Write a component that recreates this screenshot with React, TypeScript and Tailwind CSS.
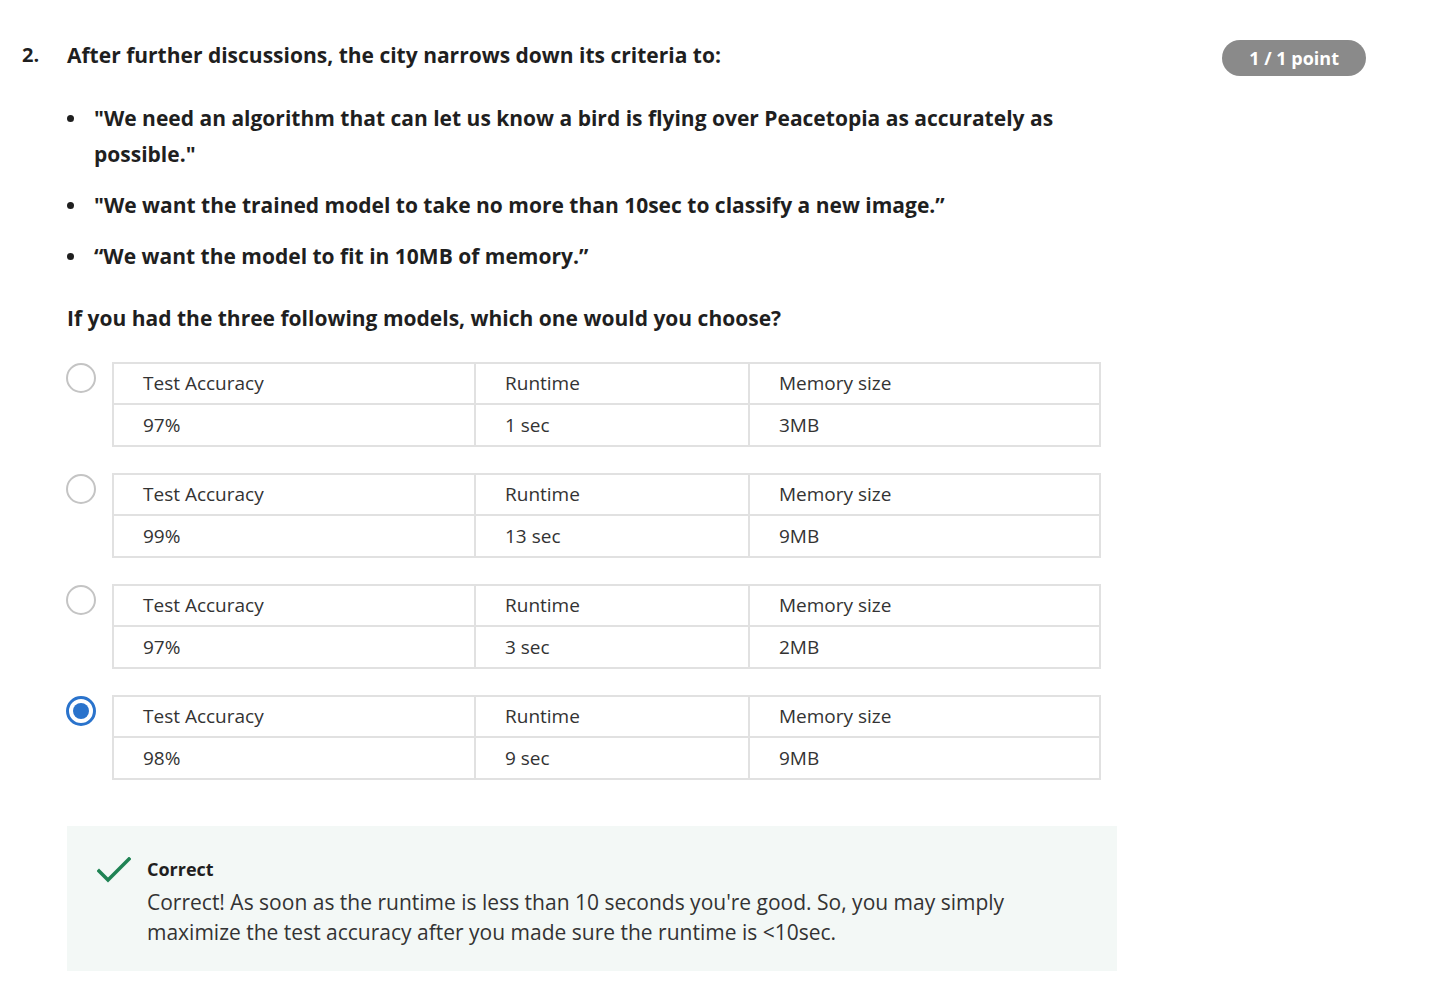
import React from 'react';

interface Option {
  accuracy: string;
  runtime: string;
  memory: string;
  selected?: boolean;
}

const options: Option[] = [
  { accuracy: '97%', runtime: '1 sec', memory: '3MB' },
  { accuracy: '99%', runtime: '13 sec', memory: '9MB' },
  { accuracy: '97%', runtime: '3 sec', memory: '2MB' },
  { accuracy: '98%', runtime: '9 sec', memory: '9MB', selected: true },
];

const Radio: React.FC<{ selected?: boolean }> = ({ selected }) =>
  selected ? (
    <div className="w-[30px] h-[30px] rounded-full border-[3px] border-[#2a73cc] flex items-center justify-center">
      <div className="w-[16px] h-[16px] rounded-full bg-[#2a73cc]" />
    </div>
  ) : (
    <div className="w-[30px] h-[30px] rounded-full border-2 border-[#c4c4c4] bg-white" />
  );

const OptionTable: React.FC<{ option: Option }> = ({ option }) => (
  <div className="flex items-start">
    <div className="w-[45px] -ml-[1px] pt-[1px]">
      <Radio selected={option.selected} />
    </div>
    <div className="w-[989px] ml-[1px] grid grid-cols-[362px_274px_1fr] border-2 border-[#e1e1e1] text-[19px] text-[#333]">
      <div className="h-[41px] flex items-center pl-[29px] border-r-2 border-b-2 border-[#e1e1e1]">Test Accuracy</div>
      <div className="h-[41px] flex items-center pl-[29px] border-r-2 border-b-2 border-[#e1e1e1]">Runtime</div>
      <div className="h-[41px] flex items-center pl-[29px] border-b-2 border-[#e1e1e1]">Memory size</div>
      <div className="h-[40px] flex items-center pl-[29px] border-r-2 border-[#e1e1e1]">{option.accuracy}</div>
      <div className="h-[40px] flex items-center pl-[29px] border-r-2 border-[#e1e1e1]">{option.runtime}</div>
      <div className="h-[40px] flex items-center pl-[29px]">{option.memory}</div>
    </div>
  </div>
);

const Bullet: React.FC<{ children: React.ReactNode }> = ({ children }) => (
  <li className="flex">
    <span className="w-[27px] shrink-0 flex pt-[15px]">
      <span className="w-[7px] h-[7px] rounded-full bg-[#1f1f1f]" />
    </span>
    <span>{children}</span>
  </li>
);

export default function App() {
  return (
    <div className="min-h-screen bg-white text-[#1f1f1f]" style={{ fontFamily: '"Open Sans", "Noto Sans", sans-serif' }}>
      <div className="pt-[40px] pl-[22px] pr-[72px] flex">
        <div className="w-[45px] text-[20px] font-bold leading-[30px]">2.</div>
        <div className="flex-1">
          <div className="flex justify-between items-start">
            <h2 className="text-[21px] font-bold leading-[30px]">
              After further discussions, the city narrows down its criteria to:
            </h2>
            <span className="h-[36px] px-[27px] rounded-full bg-[#8a8a8a] text-white text-[18px] font-bold flex items-center">
              1 / 1 point
            </span>
          </div>

          <ul className="mt-[24px] w-[1000px] text-[21px] font-bold leading-[36px] space-y-[15px]">
            <Bullet>"We need an algorithm that can let us know a bird is flying over Peacetopia as accurately as possible."</Bullet>
            <Bullet>"We want the trained model to take no more than 10sec to classify a new image.”</Bullet>
            <Bullet>“We want the model to fit in 10MB of memory.”</Bullet>
          </ul>

          <p className="mt-[29px] text-[21px] font-bold leading-[30px]">
            If you had the three following models, which one would you choose?
          </p>

          <div className="mt-[29px] flex flex-col gap-[26px]">
            {options.map((o, i) => (
              <OptionTable key={i} option={o} />
            ))}
          </div>

          <div className="mt-[46px] w-[1050px] bg-[#f3f8f6] pl-[30px] pt-[28px] pb-[24px] flex">
            <svg width="34" height="26" viewBox="0 0 34 26" className="mt-[3px] shrink-0">
              <path d="M2 14 L11 23 L32 2" fill="none" stroke="#1f8354" strokeWidth="3.5" strokeLinecap="square" />
            </svg>
            <div className="ml-[16px]">
              <div className="text-[18px] font-bold leading-[30px]">Correct</div>
              <p className="text-[21px] leading-[30px] text-[#333] mt-[3px] w-[900px]">
                Correct! As soon as the runtime is less than 10 seconds you're good. So, you may simply maximize the test accuracy after you made sure the runtime is &lt;10sec.
              </p>
            </div>
          </div>
        </div>
      </div>
    </div>
  );
}
